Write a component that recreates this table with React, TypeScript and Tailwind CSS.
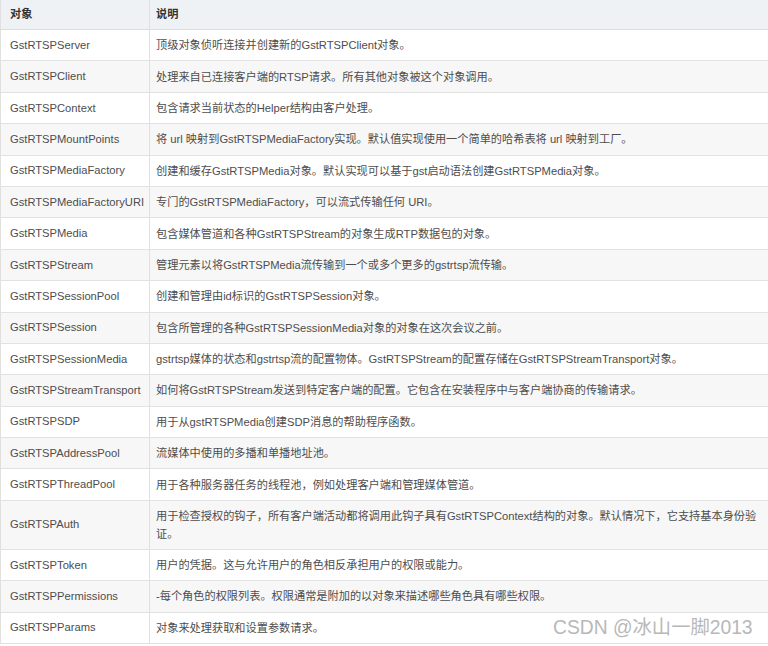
import React from 'react';

const rows: [string, string][] = [
  ['GstRTSPServer', '顶级对象侦听连接并创建新的GstRTSPClient对象。'],
  ['GstRTSPClient', '处理来自已连接客户端的RTSP请求。所有其他对象被这个对象调用。'],
  ['GstRTSPContext', '包含请求当前状态的Helper结构由客户处理。'],
  ['GstRTSPMountPoints', '将 url 映射到GstRTSPMediaFactory实现。默认值实现使用一个简单的哈希表将 url 映射到工厂。'],
  ['GstRTSPMediaFactory', '创建和缓存GstRTSPMedia对象。默认实现可以基于gst启动语法创建GstRTSPMedia对象。'],
  ['GstRTSPMediaFactoryURI', '专门的GstRTSPMediaFactory，可以流式传输任何 URI。'],
  ['GstRTSPMedia', '包含媒体管道和各种GstRTSPStream的对象生成RTP数据包的对象。'],
  ['GstRTSPStream', '管理元素以将GstRTSPMedia流传输到一个或多个更多的gstrtsp流传输。'],
  ['GstRTSPSessionPool', '创建和管理由id标识的GstRTSPSession对象。'],
  ['GstRTSPSession', '包含所管理的各种GstRTSPSessionMedia对象的对象在这次会议之前。'],
  ['GstRTSPSessionMedia', 'gstrtsp媒体的状态和gstrtsp流的配置物体。GstRTSPStream的配置存储在GstRTSPStreamTransport对象。'],
  ['GstRTSPStreamTransport', '如何将GstRTSPStream发送到特定客户端的配置。它包含在安装程序中与客户端协商的传输请求。'],
  ['GstRTSPSDP', '用于从gstRTSPMedia创建SDP消息的帮助程序函数。'],
  ['GstRTSPAddressPool', '流媒体中使用的多播和单播地址池。'],
  ['GstRTSPThreadPool', '用于各种服务器任务的线程池，例如处理客户端和管理媒体管道。'],
  ['GstRTSPAuth', '用于检查授权的钩子，所有客户端活动都将调用此钩子具有GstRTSPContext结构的对象。默认情况下，它支持基本身份验证。'],
  ['GstRTSPToken', '用户的凭据。这与允许用户的角色相反承担用户的权限或能力。'],
  ['GstRTSPPermissions', '-每个角色的权限列表。权限通常是附加的以对象来描述哪些角色具有哪些权限。'],
  ['GstRTSPParams', '对象来处理获取和设置参数请求。'],
];

export default function App() {
  return (
    <div className="relative w-[768px] h-[646px] bg-white overflow-hidden text-[11.2px] text-[#4d4d4d] font-['Liberation_Sans','Noto_Sans_CJK_SC',sans-serif]">
      <div className="flex flex-col">
        <div className="flex h-[30px] bg-[#eff2f5] border-b border-[#dcdcdc] font-bold text-[#333]">
          <div className="w-[150px] shrink-0 flex items-center pl-[9px] border-l border-r border-[#e0e0e0]">对象</div>
          <div className="flex-1 flex items-center pl-[6px]">说明</div>
        </div>
        {rows.map(([name, desc], i) => (
          <div
            key={name}
            className={`flex border-b border-[#e2e2e2] ${i % 2 === 1 ? 'bg-[#f7f7f7]' : 'bg-white'} ${name === 'GstRTSPAuth' ? 'h-[49px]' : 'h-[31.4px]'}`}
          >
            <div className="w-[150px] shrink-0 flex items-center pl-[9px] border-l border-r border-[#e0e0e0]">{name}</div>
            <div className="flex-1 flex items-center pl-[6px] pr-[10px] leading-[18px]">{desc}</div>
          </div>
        ))}
      </div>
      <div className="absolute left-[553px] top-[614px] text-[19.3px] leading-[28px] text-[#b8b8b8] [text-shadow:0_0_1px_#fff,1px_1px_0_#fff] whitespace-nowrap">
        CSDN @冰山一脚2013
      </div>
    </div>
  );
}
